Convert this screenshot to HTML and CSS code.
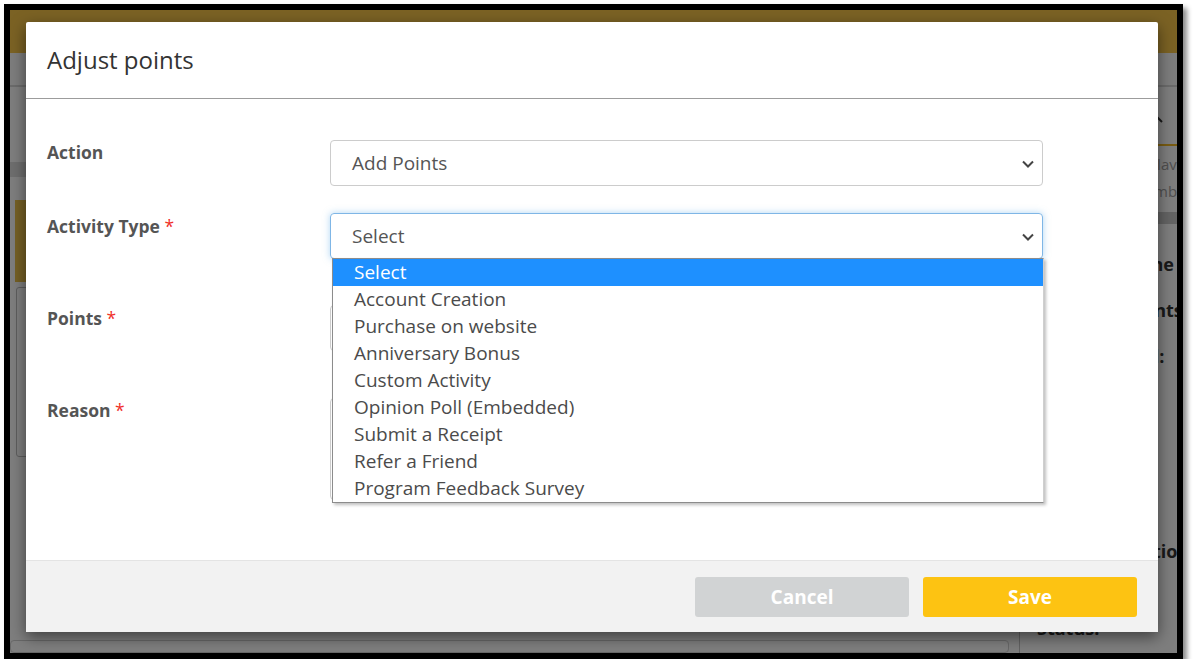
FILE: index.html
```html
<!DOCTYPE html>
<html lang="en">
<head>
    <meta charset="UTF-8">
    <meta name="viewport" content="width=device-width, initial-scale=1.0">
    <title>Adjust points</title>
    <link rel="stylesheet" href="styles.css">
</head>
<body>
    <div class="shot">
        <div class="page">
            <header class="topbar"></header>
            <div class="subbar"></div>

            <div class="main">
                <div class="left-col">
                    <div class="section-band"></div>
                    <div class="banner"></div>
                    <div class="info-box"></div>
                    <div class="bottom-card"></div>
                </div>

                <aside class="side">
                    <div class="side-head">
                        <svg class="side-caret" width="12" height="8" viewBox="0 0 12 8"><polyline points="1,7 6,2 11,7" fill="none" stroke="#333" stroke-width="2"/></svg>
                    </div>
                    <p class="side-note nudge-k">Profile synced to Klaviyo</p>
                    <p class="side-note nudge-u">Contact phone number</p>
                    <div class="side-band"></div>
                    <p class="side-label first">Member Phone</p>
                    <p class="side-label nudge-n">Account Points</p>
                    <p class="side-label nudge-l">Member Level:</p>
                    <p class="side-label low nudge-a">Email Notifications</p>
                    <p class="side-label status">Status:</p>
                </aside>
            </div>

            <div class="backdrop"></div>

            <!-- Adjust points dialog -->
            <div class="modal">
                <div class="modal-header">
                    <h4>Adjust points</h4>
                </div>

                <div class="modal-body">
                    <div class="form-row row-action">
                        <label>Action</label>
                        <div class="select">
                            <span>Add Points</span>
                            <svg width="12" height="8" viewBox="0 0 12 8"><polyline points="1,1.5 6,6.5 11,1.5" fill="none" stroke="#444" stroke-width="2"/></svg>
                        </div>
                    </div>

                    <div class="form-row row-type">
                        <label>Activity Type <span class="req">*</span></label>
                        <div class="select focused">
                            <span>Select</span>
                            <svg width="12" height="8" viewBox="0 0 12 8"><polyline points="1,1.5 6,6.5 11,1.5" fill="none" stroke="#444" stroke-width="2"/></svg>
                        </div>
                    </div>

                    <div class="form-row row-points">
                        <label>Points <span class="req">*</span></label>
                        <div class="text-input"></div>
                    </div>

                    <div class="form-row">
                        <label>Reason <span class="req">*</span></label>
                        <div class="text-area"></div>
                    </div>

                    <ul class="options">
                        <li class="active">Select</li>
                        <li>Account Creation</li>
                        <li>Purchase on website</li>
                        <li>Anniversary Bonus</li>
                        <li>Custom Activity</li>
                        <li>Opinion Poll (Embedded)</li>
                        <li>Submit a Receipt</li>
                        <li>Refer a Friend</li>
                        <li>Program Feedback Survey</li>
                    </ul>
                </div>

                <div class="modal-footer">
                    <button type="button" class="btn btn-cancel">Cancel</button>
                    <button type="button" class="btn btn-save">Save</button>
                </div>
            </div>
        </div>
    </div>
</body>
</html>
```

FILE: styles.css
```css
body {
    margin: 0;
    padding: 4px 0 0 4px;
    background: #fff;
    font-family: "Open Sans", "Liberation Sans", sans-serif;
}
.shot {
    width: 1167px;
    height: 643px;
    border: 6px solid #000;
    box-shadow: 4px 4px 5px rgba(0,0,0,0.45);
}
.page {
    position: relative;
    width: 100%;
    height: 100%;
    overflow: hidden;
    background: #fcfcfc;
}

/* page behind the dialog */
.topbar {
    height: 43px;
    background: #f7c449;
}
.subbar {
    height: 32px;
    background: #fbfbfb;
    border-bottom: 2px solid #d6d6d6;
}
.main {
    display: grid;
    grid-template-columns: 1009px 158px;
    height: 566px;
}
.left-col {
    display: flex;
    flex-direction: column;
    padding-left: 5px;
}
.section-band {
    height: 15px;
    margin: 75px 0 0 -5px;
    background: #dcdcdc;
}
.banner {
    height: 82px;
    margin-top: 23px;
    background: #eac04b;
}
.info-box {
    height: 168px;
    margin: 5px 0 0 1px;
    border: 1px solid #bdbdbd;
    border-radius: 3px;
}
.bottom-card {
    flex: 1;
    margin: 183px 10px 0 -5px;
    background: #fff;
    border: 1px solid #d0d0d0;
    border-radius: 4px;
}
.side {
    border-left: 1px solid #c4c4c4;
    padding-left: 17px;
    white-space: nowrap;
    color: #333;
}
.side-head {
    height: 57px;
    border-bottom: 2px solid #f2b824;
    display: flex;
    align-items: center;
    justify-content: flex-end;
    padding-right: 14px;
    margin-left: -17px;
}
.side-caret {
    margin-top: 6px;
}
.side-note {
    margin: 0;
    font-size: 15px;
    line-height: 27px;
    color: #a0a0a0;
}
.side-note:first-of-type {
    margin-top: 5px;
}
.side-band {
    height: 12px;
    margin: 7px 0 0 -17px;
    background: #c8c8c8;
}
.side-label {
    margin: 0;
    font-size: 18px;
    font-weight: 700;
    line-height: 24px;
    margin-top: 22px;
}
.side-label.first {
    margin-top: 28px;
}
.side-label.low {
    margin-top: 171px;
}
.side-label.status {
    margin-top: 53px;
}
.nudge-k { text-indent: -9px; }
.nudge-u { text-indent: -8px; }
.nudge-n { text-indent: 11px; }
.nudge-l { text-indent: -5px; }
.nudge-a { text-indent: -10px; }
.backdrop {
    position: absolute;
    inset: 0;
    background: rgba(0,0,0,0.5);
}

/* dialog */
.modal {
    position: absolute;
    left: 16px;
    top: 12px;
    width: 1132px;
    height: 610px;
    background: #fff;
    border-radius: 2px;
    box-shadow: 0 5px 15px rgba(0,0,0,0.5);
    display: flex;
    flex-direction: column;
}
.modal-header {
    height: 76px;
    border-bottom: 1px solid #9c9c9c;
    display: flex;
    align-items: center;
    padding-left: 21px;
}
.modal-header h4 {
    margin: 0 0 2px;
    font-size: 24px;
    font-weight: 400;
    color: #333;
}
.modal-body {
    position: relative;
    flex: 1;
    padding: 41px 115px 0 21px;
}
.form-row {
    display: grid;
    grid-template-columns: 283px 713px;
    margin-bottom: 47px;
}
.row-action {
    margin-bottom: 27px;
}
.row-type {
    margin-bottom: 46px;
}
.form-row label {
    font-size: 17.5px;
    font-weight: 700;
    line-height: 22px;
    padding-top: 1px;
    color: #555;
}
.row-type label, .row-points label {
    padding-top: 2px;
}
.req {
    font-weight: 400;
    color: #f0302a;
}
.select, .text-input {
    height: 44px;
    border: 1px solid #ccc;
    border-radius: 4px;
    display: flex;
    align-items: center;
    justify-content: space-between;
    padding: 0 8px 0 21px;
    font-size: 19px;
    color: #555;
}
.select svg {
    margin-top: 2px;
}
.select.focused {
    border-color: #7fb6e6;
    box-shadow: 0 0 7px rgba(102,175,233,0.5);
}
.text-area {
    height: 100px;
    border: 1px solid #ccc;
    border-radius: 4px;
}
.options {
    position: absolute;
    left: 306px;
    top: 159px;
    width: 710px;
    margin: 0;
    padding: 0;
    list-style: none;
    background: #fff;
    border: 1px solid #8c8c8c;
    border-right-color: #cfcfcf;
    box-shadow: 2px 2px 3px rgba(0,0,0,0.25);
}
.options li {
    height: 27px;
    line-height: 27px;
    padding-left: 21px;
    font-size: 19px;
    color: #4b4b4b;
}
.options li.active {
    background: #1e90ff;
    color: #fff;
}
.modal-footer {
    height: 71px;
    border-top: 1px solid #e4e4e4;
    background: #f2f2f2;
    display: flex;
    align-items: center;
    justify-content: flex-end;
    gap: 14px;
    padding-right: 21px;
}
.btn {
    width: 214px;
    height: 40px;
    border: none;
    border-radius: 3px;
    font-family: "Open Sans", "Liberation Sans", sans-serif;
    font-size: 19px;
    font-weight: 700;
    color: #fff;
    cursor: pointer;
}
.btn-cancel {
    background: #d1d3d4;
}
.btn-save {
    background: #fdc312;
}
```
